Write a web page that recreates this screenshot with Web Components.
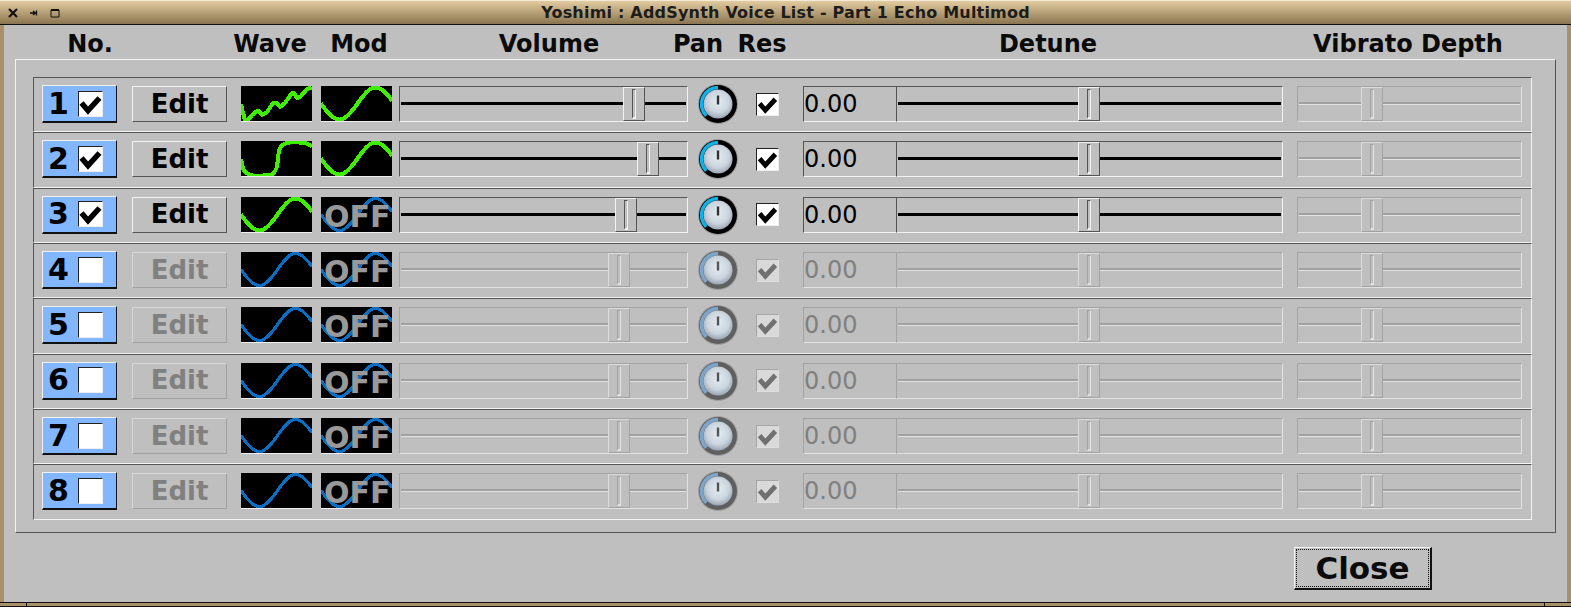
<!DOCTYPE html>
<html>
<head>
<meta charset="utf-8">
<title>Yoshimi : AddSynth Voice List</title>
<style>
  html, body { margin: 0; padding: 0; background: #bfbfbf; }
  body { font-family: "DejaVu Sans", sans-serif; overflow: hidden; }
</style>
</head>
<body>
<yo-window title="Yoshimi : AddSynth Voice List - Part 1 Echo Multimod">
  <yo-header></yo-header>
  <yo-frame>
    <yo-voice n="1" on wave="a" mod="sine" vol="223"></yo-voice>
    <yo-voice n="2" on wave="b" mod="sine" vol="237"></yo-voice>
    <yo-voice n="3" on wave="sine" mod="off" vol="215"></yo-voice>
    <yo-voice n="4" wave="sine" mod="off" vol="208"></yo-voice>
    <yo-voice n="5" wave="sine" mod="off" vol="208"></yo-voice>
    <yo-voice n="6" wave="sine" mod="off" vol="208"></yo-voice>
    <yo-voice n="7" wave="sine" mod="off" vol="208"></yo-voice>
    <yo-voice n="8" wave="sine" mod="off" vol="208"></yo-voice>
  </yo-frame>
  <yo-close>Close</yo-close>
</yo-window>

<script>
(function() {
  // small helper, every element here builds its shadow the same way
  function shadow(el, html) {
    el.attachShadow({ mode: "open" }).innerHTML = html;
    return el.shadowRoot;
  }

  class YoWindow extends HTMLElement {
    connectedCallback() {
      shadow(this, `
        <style>
          :host { display: flex; flex-direction: column; width: 1571px; height: 607px; box-sizing: border-box; background: #bfbfbf; }
          .bar {
            height: 25px; box-sizing: border-box; display: flex; align-items: center; position: relative;
            background: linear-gradient(#e2cb9f, #8b7550);
            border-top: 1px solid #f2ead8; border-bottom: 1px solid #111; flex: none;
          }
          .btns { display: flex; width: 70px; padding-left: 8px; gap: 11px; flex: none; }
          .btns svg { display: block; width: 10px; height: 10px; }
          .title { flex: 1; text-align: center; font: bold 16px "DejaVu Sans", sans-serif; color: #1c1c1c; letter-spacing: .2px; padding-right: 78px; white-space: nowrap; }
          .body { flex: 1; display: flex; flex-direction: column; border-left: 4px solid #a89068; border-right: 4px solid #a89068; min-height: 0; }
          .foot {
            height: 5px; flex: none; box-sizing: border-box; background: #a89068;
            border-top: 1px solid #111; border-bottom: 1px solid #111; position: relative;
          }
          .foot i { position: absolute; top: 0; bottom: 0; width: 1px; background: #111; }
        </style>
        <div class="bar">
          <div class="btns">
            <svg viewBox="0 0 10 10"><path d="M1 1L9 9M9 1L1 9" stroke="#111" stroke-width="2.2" fill="none"/></svg>
            <svg viewBox="0 0 10 10"><path d="M1 5H6M4 3L6.500 5L4 7M7.500 2.500V7.500" stroke="#111" stroke-width="1.3" fill="none"/></svg>
            <svg viewBox="0 0 10 10"><path d="M1 2H9V9H1Z" stroke="#111" stroke-width="1" fill="none"/><path d="M1 2H9" stroke="#111" stroke-width="2" fill="none"/></svg>
          </div>
          <div class="title">${this.getAttribute("title")}</div>
        </div>
        <div class="body"><slot></slot></div>
        <div class="foot"><i style="left:26px"></i><i style="right:26px"></i></div>
      `);
    }
  }

  class YoHeader extends HTMLElement {
    connectedCallback() {
      // title, column width, gap before it; the columns are centred over their controls
      let cols = [
        ["No.", 80, 46], ["Wave", 80, 100], ["Mod", 80, 9], ["Volume", 200, 50],
        ["Pan", 60, 19], ["Res", 60, 4], ["Detune", 200, 156], ["Vibrato Depth", 240, 140]
      ];
      let spans = cols.map(c => `<span style="width:${c[1]}px;margin-left:${c[2]}px">${c[0]}</span>`).join("");
      shadow(this, `
        <style>
          :host { display: flex; height: 34px; box-sizing: border-box; padding-top: 5px; flex: none; }
          span { display: block; flex: none; text-align: center; font: bold 24px/28px "DejaVu Sans", sans-serif; color: #0a0a0a; white-space: nowrap; }
        </style>
        ${spans}
      `);
    }
  }

  class YoFrame extends HTMLElement {
    constructor() {
      super();
      shadow(this, `
        <style>
          :host {
            display: block; flex: none; box-sizing: border-box; margin: 0 11px; height: 474px;
            padding: 17px 23px 0 17px;
            border: 1px solid #f4f4f4; border-right-color: #555; border-bottom-color: #555;
          }
        </style>
        <slot></slot>
      `);
    }
  }

  class YoCheck extends HTMLElement {
    connectedCallback() {
      let w = this.getAttribute("w") || 25, h = this.getAttribute("h") || 26;
      let dis = this.hasAttribute("disabled");
      let mark = this.hasAttribute("checked")
        ? `<svg viewBox="0 0 23 24"><path d="M2.500 11L9 18.500L20.500 6" fill="none" stroke="${dis ? "#707070" : "#000"}" stroke-width="5.500"/></svg>`
        : "";
      shadow(this, `
        <style>
          :host {
            display: block; flex: none; box-sizing: border-box; width: ${w}px; height: ${h}px;
            background: ${dis ? "#d9d9d9" : "#fff"};
            border: 1px solid ${dis ? "#a6a6a6" : "#222"};
            border-right-color: ${dis ? "#dedede" : "#eee"}; border-bottom-color: ${dis ? "#dedede" : "#eee"};
          }
          svg { display: block; width: 100%; height: 100%; }
        </style>
        ${mark}
      `);
    }
  }

  class YoNumber extends HTMLElement {
    connectedCallback() {
      let on = this.hasAttribute("on");
      shadow(this, `
        <style>
          :host {
            display: flex; align-items: center; flex: none; box-sizing: border-box; width: 75px; height: 38px;
            padding-left: 5px; gap: 9px; background: #82b6ff;
            border: 1px solid #f2f2f2; border-right-color: #111; border-bottom: 2px solid #111;
          }
          b { width: 21px; font: bold 30px/36px "DejaVu Sans", sans-serif; color: #000; text-align: center; }
        </style>
        <b>${this.getAttribute("n")}</b>
        <yo-check ${on ? "checked" : ""}></yo-check>
      `);
    }
  }

  class YoButton extends HTMLElement {
    connectedCallback() {
      let dis = this.hasAttribute("disabled");
      shadow(this, `
        <style>
          :host {
            display: flex; align-items: center; justify-content: center; flex: none; box-sizing: border-box;
            width: 95px; height: 36px; padding-bottom: 1px; font: bold 26px "DejaVu Sans", sans-serif;
            color: ${dis ? "#808080" : "#000"};
            border: 1px solid ${dis ? "#d8d8d8" : "#f2f2f2"};
            border-right-color: ${dis ? "#a0a0a0" : "#555"}; border-bottom-color: ${dis ? "#a0a0a0" : "#555"};
          }
        </style>
        <slot></slot>
      `);
    }
  }

  class YoWave extends HTMLElement {
    connectedCallback() {
      let shape = this.getAttribute("shape");
      let pts = [];
      if (shape === "a") {
        pts = [[0,18],[2,27],[4,34],[7,34],[11,29],[16,25],[18,25],[21,29],[26,26],[32,17],[36,17],[39,21],[44,17],[51,7],[53,7],[56,12],[59,11],[66,3],[69,2],[71,3]];
      } else if (shape === "b") {
        pts = [[0,18],[2,28],[5,32],[10,34],[14,35],[31,34],[34,30],[36,26],[38,9],[41,4],[46,2],[51,1],[64,2],[71,5]];
      } else {
        for (let x = 0; x <= 71; x++) {
          pts.push([x, 17.5 + 16 * Math.sin(2 * Math.PI * x / 73)]);
        }
      }
      let d = "M" + pts.map(p => p[0] + " " + p[1].toFixed(1)).join("L");
      let dim = this.hasAttribute("dim");
      let colour = dim ? "#0a6fc2" : "#40ee00";
      let off = this.hasAttribute("off") ? "<b>OFF</b>" : "";
      shadow(this, `
        <style>
          :host {
            display: block; flex: none; position: relative; box-sizing: border-box; width: 71px; height: 36px;
            background: #000; border-bottom: 1px solid #eee; overflow: hidden;
          }
          svg { display: block; position: absolute; left: 0; top: 0; }
          b { position: absolute; left: 3px; top: 1px; font: bold 30px/37px "DejaVu Sans", sans-serif; color: #999; }
        </style>
        <svg width="71" height="36" viewBox="0 0 71 36"><path d="${d}" fill="none" stroke="${colour}" stroke-width="${dim ? 3.2 : 4}" stroke-linejoin="round" shape-rendering="crispEdges"/></svg>
        ${off}
      `);
    }
  }

  class YoSlider extends HTMLElement {
    connectedCallback() {
      let dis = this.hasAttribute("disabled");
      let w = this.getAttribute("w"), pos = this.getAttribute("pos");
      shadow(this, `
        <style>
          :host {
            display: block; flex: none; position: relative; box-sizing: border-box; width: ${w}px; height: 36px;
            border: 1px solid ${dis ? "#a3a3a3" : "#555"};
            border-right-color: ${dis ? "#e2e2e2" : "#f2f2f2"}; border-bottom-color: ${dis ? "#e2e2e2" : "#f2f2f2"};
          }
          .track {
            position: absolute; left: 1px; right: 1px; top: 15px; height: 2px;
            background: ${dis ? "#a0a0a0" : "#000"}; border-bottom: 1px solid ${dis ? "#e2e2e2" : "#000"};
          }
          .thumb {
            position: absolute; left: ${pos}px; top: 0; bottom: 0; width: 22px; box-sizing: border-box;
            display: flex; justify-content: center; padding: 1px 0;
            background: #bfbfbf;
            border: 1px solid ${dis ? "#dcdcdc" : "#f2f2f2"};
            border-right-color: ${dis ? "#a3a3a3" : "#555"}; border-bottom-color: ${dis ? "#a3a3a3" : "#555"};
          }
          .thumb i {
            display: block; width: 4px; box-sizing: border-box;
            border: 1px solid ${dis ? "#a3a3a3" : "#555"};
            border-right-color: ${dis ? "#e2e2e2" : "#f2f2f2"}; border-bottom: 2px solid ${dis ? "#e2e2e2" : "#f2f2f2"};
          }
        </style>
        <div class="track"></div>
        <div class="thumb"><i></i></div>
      `);
    }
  }

  class YoKnob extends HTMLElement {
    connectedCallback() {
      let dis = this.hasAttribute("disabled");
      shadow(this, `
        <style>
          :host { display: block; flex: none; width: 40px; height: 40px; }
          svg { display: block; overflow: visible; }
        </style>
        <svg width="40" height="40" viewBox="0 0 40 40">
          <defs>
            <radialGradient id="disk" cx="50%" cy="42%" r="62%">
              <stop offset="0" stop-color="#e6ecf1"/>
              <stop offset=".6" stop-color="#cbd5de"/>
              <stop offset="1" stop-color="#8f9dab"/>
            </radialGradient>
          </defs>
          <circle cx="20" cy="20" r="20" fill="${dis ? "#a0a0a0" : "#9a9a9a"}"/>
          <circle cx="20" cy="20" r="19" fill="${dis ? "#5f5f5f" : "#000"}"/>
          <path d="M8.300 31.700A16.500 16.500 0 0 1 20 3.500" fill="none" stroke="${dis ? "#7ea6cc" : "#10b2e8"}" stroke-width="3.600"/>
          <circle cx="20" cy="20" r="14.500" fill="url(#disk)"/>
          <path d="M20 11.500V20.500" stroke="${dis ? "#555" : "#333"}" stroke-width="2.400"/>
        </svg>
      `);
    }
  }

  class YoValue extends HTMLElement {
    connectedCallback() {
      let dis = this.hasAttribute("disabled");
      shadow(this, `
        <style>
          :host {
            display: flex; align-items: center; flex: none; box-sizing: border-box; width: 93px; height: 36px;
            font: 24px "DejaVu Sans", sans-serif; color: ${dis ? "#808080" : "#000"};
            border: 1px solid ${dis ? "#a3a3a3" : "#555"}; border-right: 0;
            border-bottom-color: ${dis ? "#e2e2e2" : "#f2f2f2"};
          }
        </style>
        <slot></slot>
      `);
    }
  }

  class YoVoice extends HTMLElement {
    connectedCallback() {
      let on = this.hasAttribute("on");
      let dis = on ? "" : "disabled";
      let wave = this.getAttribute("wave"), mod = this.getAttribute("mod");
      shadow(this, `
        <style>
          :host {
            display: flex; align-items: center; box-sizing: border-box; height: 55.33px; width: 1499px;
            padding: 6px 0 7px 8px;
            border: 1px solid #555; border-right-color: #f2f2f2; border-bottom-color: #f2f2f2;
          }
          .edit { margin-left: 15px; }
          .wave { margin-left: 14px; }
          .mod { margin-left: 9px; }
          .vol { margin-left: 7px; }
          .knob { margin-left: 10px; }
          .res { margin-left: 18px; }
          .val { margin-left: 24px; }
          .vib { margin-left: 14px; }
        </style>
        <yo-number n="${this.getAttribute("n")}" ${on ? "on" : ""}></yo-number>
        <yo-button class="edit" ${dis}>Edit</yo-button>
        <yo-wave class="wave" shape="${wave}" ${on ? "" : "dim"}></yo-wave>
        <yo-wave class="mod" shape="${mod === "off" ? "sine" : mod}" ${mod === "off" ? "dim off" : ""}></yo-wave>
        <yo-slider class="vol" w="289" pos="${this.getAttribute("vol")}" ${dis}></yo-slider>
        <yo-knob class="knob" ${dis}></yo-knob>
        <yo-check class="res" w="23" h="23" checked ${dis}></yo-check>
        <yo-value class="val" ${dis}>0.00</yo-value>
        <yo-slider w="387" pos="181" ${dis}></yo-slider>
        <yo-slider class="vib" w="225" pos="63" disabled></yo-slider>
      `);
    }
  }

  class YoClose extends HTMLElement {
    connectedCallback() {
      shadow(this, `
        <style>
          :host { display: flex; justify-content: flex-end; padding: 14px 135px 0 0; flex: none; }
          .btn {
            width: 138px; height: 43px; box-sizing: border-box; display: flex; padding: 1px;
            border: 1px solid #f4f4f4; border-right: 2px solid #111; border-bottom: 2px solid #111;
          }
          .in {
            flex: 1; display: flex; align-items: center; justify-content: center;
            outline: 1px dotted #111; outline-offset: -1px;
            font: bold 31px "DejaVu Sans", sans-serif; color: #0a0a0a;
          }
        </style>
        <div class="btn"><div class="in"><slot></slot></div></div>
      `);
    }
  }

  customElements.define("yo-window", YoWindow);
  customElements.define("yo-header", YoHeader);
  customElements.define("yo-frame", YoFrame);
  customElements.define("yo-check", YoCheck);
  customElements.define("yo-number", YoNumber);
  customElements.define("yo-button", YoButton);
  customElements.define("yo-wave", YoWave);
  customElements.define("yo-slider", YoSlider);
  customElements.define("yo-knob", YoKnob);
  customElements.define("yo-value", YoValue);
  customElements.define("yo-voice", YoVoice);
  customElements.define("yo-close", YoClose);
})();
</script>
</body>
</html>
